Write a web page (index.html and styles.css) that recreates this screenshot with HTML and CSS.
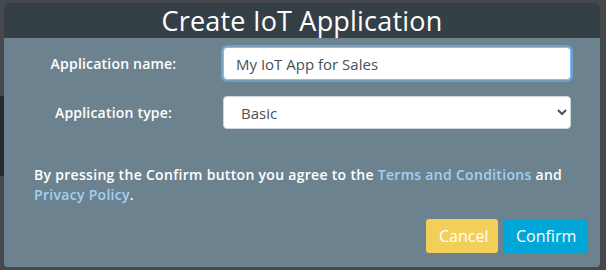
FILE: index.html
```html
<!DOCTYPE html>
<html lang="en">
<head>
    <meta charset="UTF-8">
    <meta name="viewport" content="width=device-width, initial-scale=1.0">
    <title>Create IoT Application</title>
    <link rel="stylesheet" href="styles.css">
</head>
<body>

    <div class="modal">
        <div class="modal-header">
            <h1>Create IoT Application</h1>
        </div>
        <div class="modal-body">
            <div class="form-row">
                <label for="app-name">Application name:</label>
                <input type="text" id="app-name" class="field focused" value="My IoT App for Sales">
            </div>
            <div class="form-row">
                <label for="app-type">Application type:</label>
                <select id="app-type" class="field select">
                    <option>Basic</option>
                    <option>Advanced</option>
                </select>
            </div>

            <p class="terms">
                By pressing the Confirm button you agree to the
                <a href="#">Terms and Conditions</a> and
                <a href="#">Privacy Policy</a>.
            </p>

            <div class="actions">
                <button class="btn btn-cancel">Cancel</button>
                <button class="btn btn-confirm">Confirm</button>
            </div>
        </div>
    </div>

</body>
</html>
```

FILE: styles.css
```css
body {
    font-family: "Open Sans", "Liberation Sans", sans-serif;
    background-color: #45494c;
    background-image: linear-gradient(to bottom,
        #46494b 0, #46494b 96px,
        #222a2e 96px, #222a2e 176px,
        #45494c 176px);
    background-size: 4px 100%;
    background-repeat: no-repeat;
    margin: 0;
    padding: 3px 6px 3px 4px;
}
.modal {
    width: 596px;
    height: 264px;
    background-color: #6c838f;
    border-radius: 4px;
    overflow: hidden;
    display: flex;
    flex-direction: column;
}
.modal-header {
    background-color: #343f46;
    height: 35px;
    display: flex;
    align-items: center;
    justify-content: center;
}
.modal-header h1 {
    margin: 0;
    color: #fff;
    font-size: 27px;
    font-weight: 500;
    letter-spacing: 0.2px;
}
.modal-body {
    padding: 9px 13px 14px 30px;
    display: flex;
    flex-direction: column;
    flex: 1;
}
.form-row {
    display: grid;
    grid-template-columns: 159px 1fr;
    column-gap: 30px;
    align-items: center;
    margin-bottom: 16px;
    margin-right: 16px;
}
.form-row label {
    color: #fff;
    font-size: 14px;
    font-weight: 600;
    letter-spacing: 0.2px;
    text-align: center;
}
.field {
    height: 33px;
    box-sizing: border-box;
    border: 1px solid #ced4da;
    border-radius: 4px;
    background-color: #fff;
    color: #495057;
    font-family: inherit;
    font-size: 15px;
    padding: 0 12px;
}
.field.focused {
    border-color: #80bdff;
    box-shadow: 0 0 0 2px rgba(128, 189, 255, 0.45);
    outline: none;
}
.select {
    padding-left: 13px;
}
.terms {
    color: #fff;
    font-size: 14px;
    font-weight: 600;
    letter-spacing: 0.3px;
    line-height: 20px;
    margin: 20px 8px 0 0;
}
.terms a {
    color: #a3d0f5;
    text-decoration: none;
}
.actions {
    margin-top: auto;
    display: flex;
    justify-content: flex-end;
    gap: 5px;
}
.btn {
    border: none;
    border-radius: 3px;
    color: #fff;
    font-family: inherit;
    font-size: 16px;
    height: 34px;
    padding: 0 13px;
}
.btn-cancel {
    background-color: #f2cf59;
    width: 72px;
}
.btn-confirm {
    background-color: #00a7d6;
    width: 84px;
}
```
